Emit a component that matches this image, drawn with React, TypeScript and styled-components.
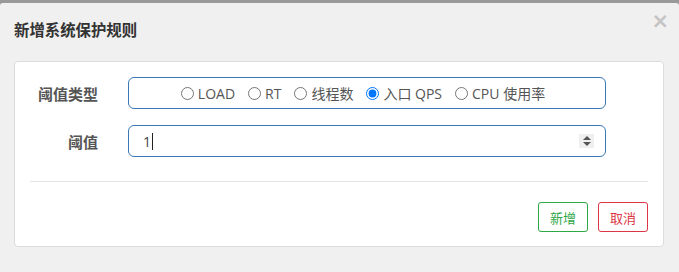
import React from "react";
import styled, { createGlobalStyle } from "styled-components";

const Global = createGlobalStyle`
  html, body { margin: 0; padding: 0; background: #999; }
  body { font-family: "Open Sans", "Noto Sans CJK SC", sans-serif; }
  * { box-sizing: border-box; }
`;

const Modal = styled.div`
  margin-top: 3px;
  height: 269px;
  background: #f0f0f0;
  border-radius: 3px 3px 0 0;
  display: flex;
  flex-direction: column;
`;

const Header = styled.div`
  display: flex;
  align-items: flex-start;
  justify-content: space-between;
  height: 58px;
  padding: 16px 10px 0 14px;
`;

const Title = styled.h4`
  margin: 0;
  font-size: 15.4px;
  font-weight: bold;
  color: #333;
  line-height: 20px;
  font-family: "Noto Sans CJK SC", sans-serif;
`;

const Close = styled.span`
  font-family: "DejaVu Sans", sans-serif;
  font-size: 21px;
  line-height: 14px;
  color: #c4c4c4;
  font-weight: bold;
  margin-top: -5px;
`;

const Panel = styled.div`
  margin: 0 15px 0 14px;
  background: #fff;
  border: 1px solid #dcdcdc;
  border-radius: 4px;
  padding: 15px 15px 14px 15px;
  display: flex;
  flex-direction: column;
`;

const Row = styled.div<{ $gap?: number }>`
  display: flex;
  align-items: center;
  margin-bottom: ${(p) => p.$gap ?? 0}px;
`;

const Label = styled.div`
  width: 68px;
  margin-right: 30px;
  text-align: right;
  font-size: 15px;
  font-weight: bold;
  color: #555;
  font-family: "Noto Sans CJK SC", sans-serif;
`;

const Field = styled.div`
  width: 478px;
  height: 32px;
  border: 1px solid #3a78b5;
  border-radius: 6px;
  display: flex;
  align-items: center;
`;

const RadioField = styled(Field)`
  justify-content: center;
  gap: 13px;
  padding-right: 8px;
`;

const RadioItem = styled.label`
  display: flex;
  align-items: center;
  font-size: 14px;
  color: #555;
  font-family: "Open Sans", "Noto Sans CJK SC", sans-serif;
  input {
    margin: 0 4px 0 0;
    width: 13px;
    height: 13px;
  }
`;

const InputField = styled(Field)`
  padding: 0 11px 0 14px;
`;

const Value = styled.span`
  font-size: 14px;
  color: #444;
`;

const Caret = styled.span`
  width: 1px;
  height: 17px;
  background: #222;
  margin-left: 1px;
`;

const Spacer = styled.div`
  flex: 1;
`;

const Spinner = styled.div`
  width: 15px;
  height: 14px;
  background: #efefef;
  display: flex;
  flex-direction: column;
  align-items: center;
  justify-content: center;
  gap: 2px;
`;

const Divider = styled.div`
  height: 1px;
  background: #e3e3e3;
  margin: 24px 0 20px;
`;

const Footer = styled.div`
  display: flex;
  justify-content: flex-end;
  gap: 10px;
`;

const Btn = styled.button<{ $color: string }>`
  width: 50px;
  height: 30px;
  background: #fff;
  border: 1px solid ${(p) => p.$color};
  color: ${(p) => p.$color};
  border-radius: 3px;
  font-size: 13px;
  font-family: "Noto Sans CJK SC", sans-serif;
  padding: 0;
`;

const options = ["LOAD", "RT", "线程数", "入口 QPS", "CPU 使用率"];

export default function App() {
  return (
    <>
      <Global />
      <Modal>
        <Header>
          <Title>新增系统保护规则</Title>
          <Close>×</Close>
        </Header>
        <Panel>
          <Row $gap={16}>
            <Label>阈值类型</Label>
            <RadioField>
              {options.map((o) => (
                <RadioItem key={o}>
                  <input type="radio" name="t" defaultChecked={o === "入口 QPS"} />
                  {o}
                </RadioItem>
              ))}
            </RadioField>
          </Row>
          <Row>
            <Label>阈值</Label>
            <InputField>
              <Value>1</Value>
              <Caret />
              <Spacer />
              <Spinner>
                <svg width="8" height="4" viewBox="0 0 8 4">
                  <path d="M0 4 L4 0 L8 4 Z" fill="#555" />
                </svg>
                <svg width="8" height="4" viewBox="0 0 8 4">
                  <path d="M0 0 L4 4 L8 0 Z" fill="#555" />
                </svg>
              </Spinner>
            </InputField>
          </Row>
          <Divider />
          <Footer>
            <Btn $color="#2ea745">新增</Btn>
            <Btn $color="#dc3545">取消</Btn>
          </Footer>
        </Panel>
      </Modal>
    </>
  );
}
